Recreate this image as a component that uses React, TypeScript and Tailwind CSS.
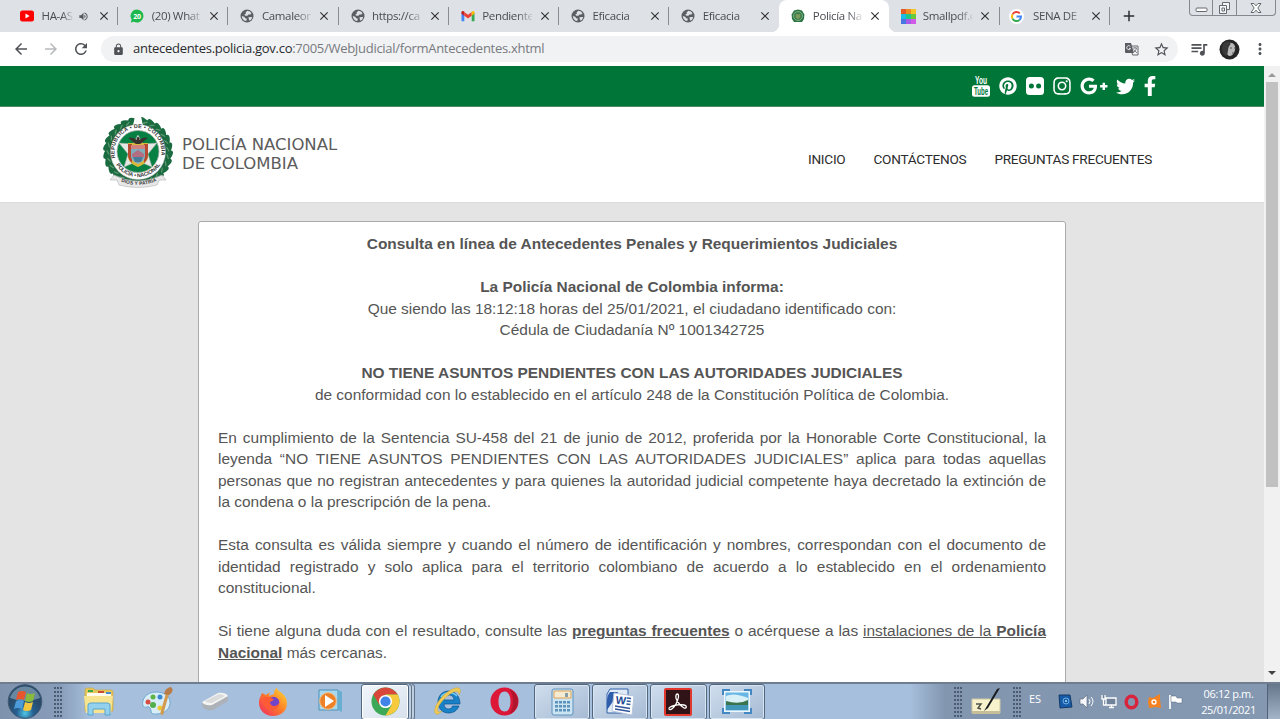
import type { ReactNode } from "react";
import { FaPinterest, FaInstagram, FaGooglePlusG, FaTwitter, FaFacebookF } from "react-icons/fa";
import { MdArrowBack, MdArrowForward, MdRefresh, MdLock, MdStarBorder, MdQueueMusic, MdMoreVert, MdClose, MdVolumeUp, MdAdd } from "react-icons/md";

function YoutubeTabIcon() {
  return (
    <svg width="14" height="14" viewBox="0 0 14 14"><rect x="0" y="1.5" width="14" height="11" rx="2.5" fill="#f00" /><path d="M5.5 4.6v4.8L9.6 7z" fill="#fff" /></svg>
  );
}
function WhatsappIcon() {
  return (
    <svg width="14" height="14" viewBox="0 0 14 14"><path d="M7 .5a6.5 6.5 0 1 1-3 12.3L.8 13.5l.8-3A6.5 6.5 0 0 1 7 .5z" fill="#1fb84c" /><text x="7" y="9.6" textAnchor="middle" fontSize="7" fontWeight="700" fill="#fff">20</text></svg>
  );
}
function GlobeIcon() {
  return (
    <svg width="14" height="14" viewBox="0 0 14 14"><circle cx="7" cy="7" r="6.5" fill="#5b5e63" /><path d="M7.3 1.8 10 2.5l1.4 1.7-1 1.3-2 .1-1 1.2H5.3L4.2 5.6l1.6-.7L5.6 3.6zM1.8 7l2.4.8 1 1.4 1.7.5-.7 2.4-2-.5-1.8-2zM8.5 8.2l2.6-.2 1.1.3-1 2.1-1.6 1.3-.8-1.5z" fill="#dfe2e8" /></svg>
  );
}
function GmailIcon() {
  return (
    <svg width="14" height="14" viewBox="0 0 14 14"><path d="M.5 3.5v8.7h2.8V5.8z" fill="#4285f4" /><path d="M13.5 3.5v8.7h-2.8V5.8z" fill="#34a853" /><path d="M3.3 3v3.8L7 9.6l3.7-2.8V3L7 5.8z" fill="#ea4335" /><path d="M.5 4.7V3.3c0-1.3 1.5-1.8 2.8-.8v4.3z" fill="#c5221f" /><path d="M13.5 4.7V3.3c0-1.3-1.5-1.8-2.8-.8v4.3z" fill="#fbbc04" /></svg>
  );
}
function MiniEmblem() {
  return (
    <svg width="14" height="14" viewBox="0 0 14 14"><path d="M3 1.5 7 .5l4 1 2.4 4-.4 4.5-2 3H3l-2-3L.6 5.5z" fill="#2c7643" /><circle cx="7" cy="7" r="4.5" fill="#3c7f4b" stroke="#9fc0a4" strokeWidth=".7" /><path d="M4.7 5.2h4.6v3L7 10.2 4.7 8.2z" fill="#7d9a5d" /></svg>
  );
}
function SmallpdfIcon() {
  return (
    <svg width="15" height="15" viewBox="0 0 15 15"><path fill="#e35b24" d="M0 0h5v5H0z" /><path fill="#f28c20" d="M5 0h5v5H5z" /><path fill="#f5c527" d="M10 0h5v5h-5z" /><path fill="#1bbbe6" d="M0 5h5v5H0z" /><path fill="#20c888" d="M5 5h5v5H5z" /><path fill="#68c93d" d="M10 5h5v5h-5z" /><path fill="#4676df" d="M0 10h5v5H0z" /><path fill="#a85be8" d="M5 10h5v5H5z" /><path fill="#d05be8" d="M10 10h5v5h-5z" /></svg>
  );
}
function GoogleIcon() {
  return (
    <svg className="-ml-[3px]" width="15" height="15" viewBox="0 0 15 15"><circle cx="7.5" cy="7.5" r="7.5" fill="#fff" /><g fill="none" strokeWidth="2"><path d="M3.5 5.4A4.5 4.5 0 0 1 10.8 4.3" stroke="#ea4335" /><path d="M3.5 5.4a4.5 4.5 0 0 0 0 4.2" stroke="#fbbc05" /><path d="M3.5 9.6a4.5 4.5 0 0 0 7 1.3" stroke="#34a853" /><path d="M7.5 7.6H12a4.5 4.5 0 0 1-1.5 3.3" stroke="#4285f4" /></g></svg>
  );
}

type TabProps = { icon: ReactNode; label: string; active?: boolean; audio?: boolean; divider?: boolean };
function Tab({ icon, label, active, audio, divider = true }: TabProps) {
  return (
    <div className={active ? "relative flex h-8 w-[110px] shrink-0 items-center rounded-t-lg bg-white pl-[12px]" : "relative flex h-8 w-[110.2px] shrink-0 items-center pl-[12px]"}>
      <span className="flex w-[21.5px] shrink-0">{icon}</span>
      <span className={audio ? "w-[33px] shrink-0 whitespace-nowrap [mask-image:linear-gradient(90deg,#000_60%,transparent_98%)]" : "w-[49.5px] shrink-0 whitespace-nowrap [mask-image:linear-gradient(90deg,#000_70%,transparent_106%)]"}>{label}</span>
      {audio && <MdVolumeUp className="ml-[3.5px] mr-[2px] size-[11px] shrink-0 text-[#55585c]" />}
      <MdClose className="ml-[6px] size-[14px] shrink-0 text-[#333]" />
      {divider && <span className="absolute right-0 top-[7px] h-[18px] w-px bg-[#898c91]" />}
      {active && <><span className="absolute -left-2 bottom-0 size-2 bg-[radial-gradient(circle_at_0_0,transparent_8px,#fff_8.5px)]" /><span className="absolute -right-2 bottom-0 size-2 bg-[radial-gradient(circle_at_100%_0,transparent_8px,#fff_8.5px)]" /></>}
    </div>
  );
}

function WindowControls() {
  return (
    <div className="ml-auto mr-[4px] flex h-4 w-[87px] shrink-0 self-start rounded-b-[4px] border border-t-0 border-[#85888e] text-[#66696f]">
      <div className="flex w-[23px] items-center justify-center border-r border-[#85888e]"><svg width="13" height="15" viewBox="0 0 13 15"><rect x="1" y="8" width="11" height="3.5" rx="1" fill="#fff" stroke="currentColor" /></svg></div>
      <div className="flex w-[24px] items-center justify-center border-r border-[#85888e]"><svg width="13" height="14" viewBox="0 0 13 14"><g fill="#f4f5f7" stroke="currentColor"><path d="M4.5 1.5h7v7h-7z" /><path d="M1.5 4.5h7v8h-7z" /><path d="M4 7h2.5v3H4z" /></g></svg></div>
      <div className="flex flex-1 items-center justify-center"><svg width="12" height="12" viewBox="0 0 12 12"><path d="M1 1.5h3l2 2.3 2-2.3h3L7.8 6l3.2 4.5H8L6 8.2l-2 2.3H1L4.2 6z" fill="#fff" stroke="currentColor" /></svg></div>
    </div>
  );
}

function Toolbar() {
  return (
    <div className="flex h-[34px] items-center bg-white text-[#4f5257]">
      <MdArrowBack className="ml-[12px] size-[18px]" />
      <MdArrowForward className="ml-[12px] size-[18px] text-[#b7b9bc]" />
      <MdRefresh className="ml-[12px] size-[18px]" />
      <div className="ml-[11px] flex h-[26px] w-[1077px] items-center rounded-full bg-[#f1f2f4] pl-[11px] pr-[8px]">
        <MdLock className="size-[13px]" />
        <span className="ml-[8px] text-[13px] tracking-[-0.28px] text-[#777a7e]"><span className="text-[#292b2f]">antecedentes.policia.gov.co</span>:7005/WebJudicial/formAntecedentes.xhtml</span>
        <svg className="ml-auto" width="14" height="14" viewBox="0 0 14 14"><path d="M5.5 4H13v9H7.5z" fill="#f1f2f4" stroke="#66696e" /><path d="M0 1h6l3 10H1q-1 0-1-1z" fill="#595c61" /><path d="M5.3 4.4A2 2 0 1 0 5.6 6.4H4" fill="none" stroke="#f1f2f4" strokeWidth=".9" /><path d="M8 6h4m-2-1v1m1.5 0q-.5 3-2.5 4m-.5-2.5L12 11" fill="none" stroke="#66696e" strokeWidth=".8" /></svg>
        <MdStarBorder className="ml-[14px] size-[17px]" />
      </div>
      <MdQueueMusic className="ml-[11px] size-[20px]" />
      <svg className="ml-[10px]" width="21" height="21" viewBox="0 0 21 21"><circle cx="10.5" cy="10.5" r="10" fill="#252525" /><path d="M10 4c4-1 7 2 6 7-1 4-3 6-6 6-2-1-3-4-2-7z" fill="#b9b9b9" /><path d="M4 5c5-5 9-1 7 1-3 3-1 8-4 11-4-2-5-8-3-12z" fill="#3a3a3a" /><path d="M11 9h2m2 0h1m-3 5h2" stroke="#555" /></svg>
      <MdMoreVert className="ml-[11px] size-[18px]" />
    </div>
  );
}

function YoutubeSocial() {
  return (
    <svg className="overflow-visible" width="18" height="21" viewBox="0 0 18 21" fill="#fff"><text x="9" y="8" textAnchor="middle" textLength="12" lengthAdjust="spacingAndGlyphs" fontFamily="Liberation Sans, sans-serif" fontSize="10.5" fontWeight="700">You</text><rect x="0" y="9.2" width="18" height="11.5" rx="2.5" /><text x="9" y="18.7" textAnchor="middle" textLength="14" lengthAdjust="spacingAndGlyphs" fontFamily="Liberation Sans, sans-serif" fontSize="10" fontWeight="700" fill="#007a3b">Tube</text></svg>
  );
}

const leaves = Array.from({ length: 25 }, (_, i) => 10 + i * 14.2);
function Emblem() {
  return (
    <svg className="overflow-visible" width="72" height="72" viewBox="0 0 72 72">
      <defs><path id="ring-top" d="M13.7 42A23.5 23.5 0 1 1 58.3 42" /><path id="ring-low" d="M13 46A25.8 25.8 0 0 0 59 46" /><path id="motto" d="M17 61Q36 70 55 61" /></defs>
      <circle cx="36" cy="35" r="29" fill="none" stroke="#1d6840" strokeWidth="8" />
      {leaves.map((a) => <g key={a} transform={`rotate(${a} 36 35)`}><ellipse cx="36" cy="3" rx="4.6" ry="2.4" transform="rotate(22 36 3)" fill="#1b6b40" /><ellipse cx="38" cy="5" rx="3" ry=".7" transform="rotate(-24 38 5)" fill="#5b9a70" /></g>)}
      <path d="M33 -1h6l2 10h-10z" fill="#fff" />
      <circle cx="36" cy="35" r="27.5" fill="#fff" stroke="#bbb" strokeWidth=".5" />
      <circle cx="36" cy="34.5" r="21" fill="#078044" stroke="#a9b0a9" strokeWidth=".8" />
      <path d="m36 18 5 9 14-1-9 11 4 13-14-6-14 6 4-13-9-11 14 1z" fill="#e5e8e5" stroke="#9aaea1" strokeWidth=".6" />
      <path d="M26 26h20v13c0 6-5 9-10 11-5-2-10-5-10-11z" fill="#d8b93d" />
      <path d="M26 27h4v19c-2-2-4-4-4-8zM42 27h4v11c0 4-2 6-4 8z" fill="#b74931" />
      <path d="M29 28h14v11c0 5-4 6-7 8-3-2-7-3-7-8z" fill="#7eaebe" />
      <path d="M29 28h14v4H29z" fill="#d3837e" /><path d="m30 37 6-4 6 4v3H30z" fill="#b46d81" /><path d="M31 40h10l-2 5h-6z" fill="#497c99" />
      <path d="M36 20c2 0 2 2 1 3 4-3 7-3 9-2-3 1-5 5-8 6h-4c-3-1-5-5-8-6 2-1 5-1 9 2-1-1 0-3 1-3z" fill="#39332d" />
      <path d="M12 58q24 12 48 0l4 5-7 0-2 5q-19 5-38 0l-2-5-7 0z" fill="#e8e8e8" stroke="#b4b4b4" strokeWidth=".6" />
      <g fontFamily="Liberation Sans, sans-serif" fontWeight="700" fill="#333" fontSize="5.4">
        <text><textPath href="#ring-top" textLength="84" startOffset="1">REPÚBLICA • DE • COLOMBIA</textPath></text>
        <text><textPath href="#ring-low" textLength="53" startOffset="2">POLICÍA • NACIONAL</textPath></text>
        <text dy="2.5" fontSize="4.8"><textPath href="#motto" textLength="35" startOffset="3">DIOS Y PATRIA</textPath></text>
      </g>
    </svg>
  );
}

function Grip() {
  return <div className="h-[30px] w-[9px] shrink-0 bg-[radial-gradient(circle_at_1px_1px,#4b5c73_0.9px,transparent_1.1px)] bg-[size:3px_4px]" />;
}
function Slot({ children }: { children: ReactNode }) {
  return <div className="flex w-[58px] shrink-0 items-center justify-center">{children}</div>;
}
function TaskButton({ children }: { children: ReactNode }) {
  return <div className="mr-[2px] flex h-[36px] w-[56.2px] shrink-0 items-center justify-center rounded-[3px] border border-[#52667d] bg-linear-to-br from-[#d0deee] to-[#a5bad3] shadow-[inset_0_0_0_1px_#d8e5f2]">{children}</div>;
}

function Taskbar() {
  return (
    <div className="flex h-[37px] w-full shrink-0 items-center border-t-2 border-[#6e7e90] bg-[linear-gradient(90deg,#7e92ad_0,#889db9_60px,#a6bfdc_90px,#a6bfdc_910px,#8296b0_945px,#8498b2_1280px)] font-['Open_Sans','Noto_Sans',sans-serif] text-white">
      <svg className="ml-[7px] shrink-0" width="36" height="35" viewBox="0 0 36 35">
        <defs><radialGradient id="orb" cx="50%" cy="85%"><stop offset="0" stopColor="#51c5e7" /><stop offset=".5" stopColor="#245f91" /><stop offset="1" stopColor="#294c6c" /></radialGradient></defs>
        <circle cx="18" cy="17.5" r="16.8" fill="url(#orb)" stroke="#415872" /><path d="M3 14A15.5 15.5 0 0 1 33 14Q18 20 3 14" fill="#b9d2e0" opacity=".45" />
        <path d="M11 8q4-2 8 0l-2 8q-4-2-8 0z" fill="#e7562c" /><path d="M20 9q4 2 8 0l-2 8q-4 2-8 0z" fill="#87ba3d" /><path d="M9 17q4-2 8 0l-2 8q-4-2-8 0z" fill="#4d9bd9" /><path d="M18 18q4 2 8 0l-2 8q-4 2-8 0z" fill="#f4c63d" />
      </svg>
      <div className="ml-[11px] mr-[7px]"><Grip /></div>
      <Slot><svg width="32" height="29" viewBox="0 0 32 29"><path d="M2 3q0-2 2-2h6l2 2h16q2 0 2 2v19H2z" fill="#e5c75b" stroke="#c7a747" strokeWidth=".7" /><path d="M4 6h24v3H4z" fill="#fffbed" /><path d="M5 3h5v2H5z" fill="#38a849" /><path d="M15 4h6v2h-6z" fill="#cd4a32" /><path d="M23 5h5v2h-5z" fill="#4689cf" /><path d="M1 9h29l-2 17H3z" fill="#f7e491" /><path d="M5 28V18q0-2 3-2h16q3 0 3 2v10h-5v-6H10v6z" fill="#94d1ef" stroke="#57a5cf" /></svg></Slot>
      <Slot><svg width="32" height="30" viewBox="0 0 32 30"><path d="M15 5C5 5 0 13 2 19c2 3 5-1 7 2 2 2-1 7 7 6 8 0 14-6 13-13C28 8 22 5 15 5z" fill="#d8edf7" stroke="#6da9d2" /><circle cx="7" cy="15" r="2.5" fill="#d64e44" /><circle cx="12" cy="10" r="2.5" fill="#5db445" /><circle cx="19" cy="10" r="2.5" fill="#3889d1" /><circle cx="12" cy="18" r="3" fill="#54ae4b" /><circle cx="19" cy="21" r="2.5" fill="#efc834" /><path d="m19 27 6-21 3 1-6 21z" fill="#d39b52" /><path d="M23 7q1-6 7-7 4 4-2 8z" fill="#b77c48" /></svg></Slot>
      <Slot><svg width="30" height="20" viewBox="0 0 30 20"><path d="m2 11 16-9q7-1 10 3v4l-15 9q-8 1-11-4z" fill="#adb2b8" /><path d="m2 10 16-9q7-1 10 3L12 13Q5 14 2 10z" fill="#f5f5f3" /><path d="m5 9 14-7q4 0 6 2L12 11q-5 0-7-2z" fill="#dadbdb" /></svg></Slot>
      <Slot><svg width="30" height="30" viewBox="0 0 30 30"><defs><linearGradient id="fox" x1="1" y1="0" x2="0" y2="1"><stop stopColor="#ffe136" /><stop offset=".5" stopColor="#ff7a28" /><stop offset="1" stopColor="#ee2466" /></linearGradient></defs><path d="m4 6 4 2 4-3-1 4 5-2c0-4 2-6 3-6 0 4 10 5 10 15 0 8-6 13-14 13S1 23 1 16C1 11 3 9 4 6z" fill="url(#fox)" /><circle cx="15.5" cy="15.5" r="5.8" fill="#7145c8" /><path d="M5 10q7-1 11 3l-4 2c0 5 7 5 9 1 0 9-14 9-16-1z" fill="#ff5c35" /></svg></Slot>
      <Slot><svg width="28" height="25" viewBox="0 0 28 25"><path d="M2 1h19v20H2z" fill="#a8d9ee" stroke="#4a91b8" /><path d="m21 1 4 2v20l-4-2z" fill="#67aed0" /><circle cx="11" cy="12" r="8.3" fill="#ec8127" stroke="#f6ba7e" /><path d="m8 6 9 6-9 6z" fill="#fff" /></svg></Slot>
      <div className="ml-px mr-[4px] flex h-[36px] w-[54px] shrink-0">
        <div className="flex w-[48px] items-center justify-center rounded-[3px] border border-[#52667d] bg-linear-to-br from-[#f2f6fb] to-[#d6e0ec] shadow-[inset_0_0_0_1px_#fff]">
          <svg width="29" height="29" viewBox="0 0 29 29"><circle cx="14.5" cy="14.5" r="14" fill="#3ba957" /><path d="M2.4 7.5A14 14 0 0 1 26.6 7.5H14.5L8.4 18z" fill="#d9473b" /><path d="M26.6 7.5A14 14 0 0 1 14.5 28.5L20.6 18 14.5 7.5z" fill="#f7ca3d" /><circle cx="14.5" cy="14.5" r="6.6" fill="#fff" /><circle cx="14.5" cy="14.5" r="5.1" fill="#4184e8" /></svg>
        </div>
        <div className="w-[3px] rounded-r border-y border-r border-[#62758b] bg-[#bdcee1]" /><div className="w-[3px] rounded-r border-y border-r border-[#62758b] bg-[#bdcee1]" />
      </div>
      <div className="flex w-[58px] shrink-0 justify-center"><svg width="31" height="29" viewBox="0 0 31 29"><path fillRule="evenodd" d="M26 19C24 24 20 26 15.5 26 9 26 5 21 5 15S9 4 15.5 4C22 4 27 9 27 17H11c0 3 2 5 4.5 5 2 0 3.5-1 4-3zM11 13h10c0-3-2-5-5-5s-5 2-5 5z" fill="#1782c8" stroke="#0e518e" strokeWidth=".7" /><path d="M8 10c3-5 12-6 16-1" fill="none" stroke="#79cdf0" strokeWidth="1.5" /><path d="M3 27C-1 24 4 14 12 7c6-5 13-8 15-5 1 2 0 4-1 6 0-4-3-5-9-1C10 12 3 21 5 24c0 1 2 1 4 0-2 2-4 4-6 3z" fill="#efc956" stroke="#c99d25" strokeWidth=".4" /></svg></div>
      <div className="flex w-[55px] shrink-0 justify-center"><svg width="29" height="29" viewBox="0 0 29 29"><path fillRule="evenodd" d="M14.5.5a14 14 0 1 0 0 28 14 14 0 0 0 0-28m0 4c4 0 6 4 6 10s-2 10-6 10-6-4-6-10 2-10 6-10z" fill="#dc1738" /><path d="M19 2q9 4 9 12.5T19 27q4-4 4-12.5T19 2" fill="#af152d" /></svg></div>
      <div className="ml-[2px] flex shrink-0">
        <TaskButton><svg width="23" height="28" viewBox="0 0 23 28"><rect x="1" y="1" width="21" height="26" rx="2" fill="#cce3f2" stroke="#5d92bd" /><path d="M3 3h17v7H3z" fill="#f5ead2" stroke="#dfa354" /><path d="M14 5h3v4h-3z" fill="#849da6" />{[13, 17, 21].map((y) => <g key={y} fill="#5b93bd">{[4, 8, 12, 16].map((x) => <rect key={x} x={x} y={y} width="3" height="2.5" />)}</g>)}</svg></TaskButton>
        <TaskButton><svg width="30" height="30" viewBox="0 0 30 30"><path d="M5 2h18v24H2V7z" fill="#e1ebf7" stroke="#3160a8" /><path d="M5 5q-4 3-3 18l7-10 4-8z" fill="#2e5dab" /><path d="m9 6 20 3-2 19-20-4z" fill="#fff" stroke="#b5c5dd" /><text x="15.5" y="17" textAnchor="middle" fontFamily="Liberation Sans, sans-serif" fontSize="11" fontWeight="700" fill="#254b91" transform="rotate(7 15 17)">W</text><path d="m22 11 4 .6m-4.3 2.4 4 .6m-4.3 2.4 4 .6M10 19l15 2.5M10 22l15 2.5" stroke="#31559a" strokeWidth="1.5" /></svg></TaskButton>
        <TaskButton><svg width="28" height="28" viewBox="0 0 28 28"><rect x="1" y="1" width="26" height="26" rx="1" fill="#301316" stroke="#e2372c" strokeWidth="2" /><path d="M13 6c3 0 1 6-1 10s-6 7-7 5c-1-3 10-5 15-4 4 1 2 4 0 3-4-2-9-9-8-12 0-1 0-2 1-2z" fill="none" stroke="#fff" strokeWidth="1.3" /></svg></TaskButton>
        <TaskButton><svg width="30" height="25" viewBox="0 0 30 25"><path d="M0 0h8v6H0zM22 0h8v6h-8zM0 19h8v6H0zM22 19h8v6h-8z" fill="#4388c3" /><path d="M2 2h26v21H2z" fill="#eef8fc" /><path d="M3.5 3.5h23v18h-23z" fill="#68b6e5" /><path d="M4 7q8-4 22 2v6H4z" fill="#d9f0f7" /><path d="M4 12q13 4 22-1v5H4z" fill="#3b754d" /><path d="M4 16h22v5H4z" fill="#4296b8" /></svg></TaskButton>
      </div>
      <div className="ml-auto flex h-full w-[326px] shrink-0 items-center">
        <Grip />
        <svg className="ml-[8px]" width="32" height="30" viewBox="0 0 32 30"><path d="M1 12h28v14H1z" fill="#f7f2cb" stroke="#cfc8a3" /><path d="M1 24h28v3H1z" fill="#c6be99" /><path d="M5 17h5l-3 4 3 1" fill="none" stroke="#4f5348" strokeWidth="1.5" /><path d="M13 24 26 2l3-1-12 20z" fill="#181d20" /></svg>
        <div className="ml-[10px]"><Grip /></div>
        <span className="ml-[7px] w-[14px] -translate-y-[2px] text-[11px] tracking-[-0.2px]">ES</span>
        <div className="ml-[11px] flex items-center">
          <div className="flex w-[22px] justify-center"><svg width="15" height="15" viewBox="0 0 15 15"><path d="M1 1h11l2 12-12 1z" fill="#165ba8" stroke="#153b68" /><circle cx="8" cy="7" r="3" fill="none" stroke="#6dafe5" /><circle cx="8" cy="7" r="1" fill="#b7dcf5" /></svg></div>
          <div className="flex w-[22px] justify-center"><svg width="16" height="15" viewBox="0 0 16 15"><path d="M1 5h3l4-4v13l-4-4H1z" fill="#f5f7fa" stroke="#57657a" strokeWidth=".6" /><path d="M10 5q2 2 0 5m2-7q4 4 0 9" fill="none" stroke="#fff" /></svg></div>
          <div className="flex w-[22px] justify-center"><svg width="16" height="15" viewBox="0 0 16 15"><path d="M5 4h10v7H5zM8 13.5h5m-2.5-2v2M1 1v4h3V1M2.5 5v6H5" fill="#71839b" stroke="#fff" strokeWidth="1.3" /></svg></div>
          <div className="flex w-[23px] justify-center"><svg width="15" height="16" viewBox="0 0 15 16"><ellipse cx="7.5" cy="8" rx="5.3" ry="5.7" fill="none" stroke="#d8243c" strokeWidth="3.5" /></svg></div>
          <div className="flex w-[22px] justify-center"><svg width="15" height="15" viewBox="0 0 15 15"><path d="M2 3 6 4 13 0v5l1 9-5-1-7 1-1-6z" fill="#f58220" /><circle cx="7" cy="8" r="2" fill="none" stroke="#fff" strokeWidth="1.3" /></svg></div>
          <div className="flex w-[22px] justify-center"><svg width="16" height="16" viewBox="0 0 16 16"><path d="M2 1v14" stroke="#fff" strokeWidth="1.7" /><path d="M3 2h5l1 2h5v5H9L8 8H3z" fill="#fff" stroke="#556579" strokeWidth=".5" /></svg></div>
        </div>
        <div className="ml-auto mr-[11px] w-[54px] whitespace-nowrap text-center text-[11px] leading-[16px] tracking-[-0.38px]"><div className="-ml-[4px] -mr-[3px]">06:12 p.m.</div><div className="-ml-[4px] -mr-[3px]">25/01/2021</div></div>
        <div className="h-full w-[13px] border-l border-[#50627a] bg-linear-to-b from-[#66778b] to-[#a4b4c8]" />
      </div>
    </div>
  );
}

export default function App() {
  return (
    <div className="flex h-[719px] w-[1280px] flex-col overflow-hidden bg-[#e4e4e4]">
      <div className="shrink-0 font-['Open_Sans','Noto_Sans',sans-serif] text-[11.5px] text-[#4a4d51]">
        <div className="flex h-8 items-center bg-[#dee1e6] pl-[8px] tracking-[-0.35px]">
          <Tab icon={<YoutubeTabIcon />} label="HA-AS" audio />
          <Tab icon={<WhatsappIcon />} label="(20) What" />
          <Tab icon={<GlobeIcon />} label="Camaleon" />
          <Tab icon={<GlobeIcon />} label="https://ca" />
          <Tab icon={<GmailIcon />} label="Pendiente" />
          <Tab icon={<GlobeIcon />} label="Eficacia" />
          <Tab icon={<GlobeIcon />} label="Eficacia" divider={false} />
          <Tab icon={<MiniEmblem />} label="Policía Na" active divider={false} />
          <Tab icon={<SmallpdfIcon />} label="Smallpdf.c" />
          <Tab icon={<GoogleIcon />} label="SENA DE" />
          <MdAdd className="ml-[10px] size-[18px] text-[#2c2e31]" />
          <WindowControls />
        </div>
        <Toolbar />
      </div>
      <div className="flex min-h-0 flex-1">
        <div className="flex w-[1264px] flex-col overflow-hidden">
          <div className="flex h-[41px] shrink-0 items-center justify-end border-b border-[#4d8b67] bg-[#007538] pr-[106px] text-white">
            <YoutubeSocial />
            <FaPinterest className="ml-[9px] size-[18px]" />
            <svg className="ml-[9px]" width="18" height="18" viewBox="0 0 18 18"><rect width="18" height="18" rx="3.5" fill="#fff" /><circle cx="5.4" cy="9" r="2.5" fill="#007538" /><circle cx="12.6" cy="9" r="2.5" fill="#007538" /></svg>
            <FaInstagram className="ml-[8px] size-[20px]" />
            <FaGooglePlusG className="ml-[8px] size-[28px]" />
            <FaTwitter className="ml-[8px] size-[19px]" />
            <FaFacebookF className="ml-[7px] h-[20px] w-[16px]" />
          </div>
          <div className="flex h-[96px] shrink-0 items-center border-b border-[#dcdcdc] bg-white pl-[102px] pr-[112px]">
            <div className="-translate-y-[2px]"><Emblem /></div>
            <div className="-mt-[2px] ml-[8px] font-['DejaVu_Sans',sans-serif] text-[16.5px] leading-[19px] tracking-[-0.02px] text-[#5c5c5c]">POLICÍA NACIONAL<br />DE COLOMBIA</div>
            <nav className="ml-auto mt-[10px] flex gap-[28px] font-[Roboto,sans-serif] text-[13.6px] tracking-[-0.25px] text-[#2c2c2c]"><span>INICIO</span><span>CONTÁCTENOS</span><span>PREGUNTAS FRECUENTES</span></nav>
          </div>
          <main className="ml-[198px] mt-[18px] h-[600px] w-[868px] shrink-0 rounded-t-[3px] border border-[#aaa] bg-white px-[19px] pt-[11px] font-['Liberation_Sans',Arial,sans-serif] text-[15.45px] leading-[21.53px] text-[#555]">
            <div className="text-center">
              <p className="mb-[21.53px] font-bold">Consulta en línea de Antecedentes Penales y Requerimientos Judiciales</p>
              <p className="font-bold">La Policía Nacional de Colombia informa:</p>
              <p>Que siendo las 18:12:18 horas del 25/01/2021, el ciudadano identificado con:</p>
              <p className="mb-[21.53px]">Cédula de Ciudadanía Nº 1001342725</p>
              <p className="font-bold">NO TIENE ASUNTOS PENDIENTES CON LAS AUTORIDADES JUDICIALES</p>
              <p>de conformidad con lo establecido en el artículo 248 de la Constitución Política de Colombia.</p>
            </div>
            <div className="mt-[21.53px] space-y-[21.53px] text-justify">
              <p>En cumplimiento de la Sentencia SU-458 del 21 de junio de 2012, proferida por la Honorable Corte Constitucional, la leyenda “NO TIENE ASUNTOS PENDIENTES CON LAS AUTORIDADES JUDICIALES” aplica para todas aquellas personas que no registran antecedentes y para quienes la autoridad judicial competente haya decretado la extinción de la condena o la prescripción de la pena.</p>
              <p>Esta consulta es válida siempre y cuando el número de identificación y nombres, correspondan con el documento de identidad registrado y solo aplica para el territorio colombiano de acuerdo a lo establecido en el ordenamiento constitucional.</p>
              <p>Si tiene alguna duda con el resultado, consulte las <b className="underline">preguntas frecuentes</b> o acérquese a las <span className="underline">instalaciones de la <b>Policía Nacional</b></span> más cercanas.</p>
            </div>
          </main>
        </div>
        <div className="flex w-4 shrink-0 flex-col items-center bg-[#f1f1f1] py-[6px]">
          <svg width="8" height="5" viewBox="0 0 8 5"><path d="m0 5 4-4 4 4z" fill="#999" /></svg>
          <div className="mt-[5px] h-[405px] w-[12px] bg-[#c1c1c1]" />
          <svg className="mt-auto" width="8" height="5" viewBox="0 0 8 5"><path d="m0 0 4 4 4-4z" fill="#444" /></svg>
        </div>
      </div>
      <Taskbar />
    </div>
  );
}
